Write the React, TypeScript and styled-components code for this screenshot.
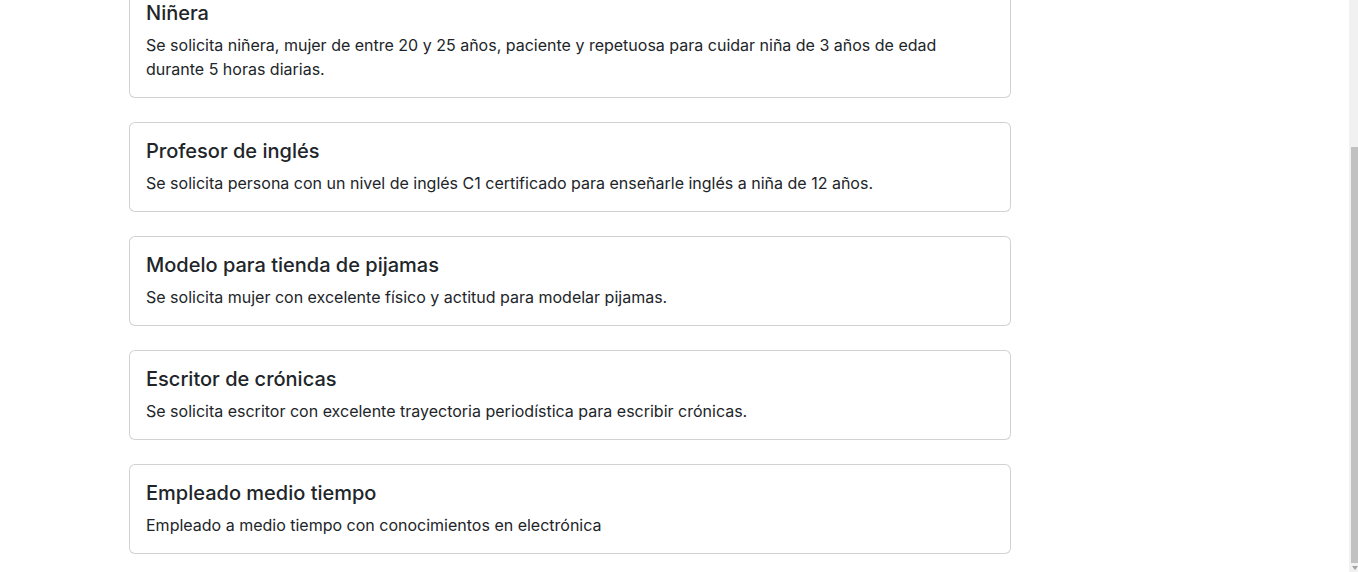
import React, { useLayoutEffect, useRef } from "react";
import styled, { createGlobalStyle } from "styled-components";

const GlobalStyle = createGlobalStyle`
  html, body { margin: 0; padding: 0; background: #fff; overflow: hidden; }
  body {
    font-family: Inter, "Noto Sans", "Liberation Sans", sans-serif;
    font-size: 16px;
    line-height: 1.5;
    color: #212529;
  }
  * { box-sizing: border-box; }
`;

const Viewport = styled.div`
  height: 100vh;
  overflow-y: scroll;
  &::-webkit-scrollbar { width: 9px; }
  &::-webkit-scrollbar-track { background: #f1f1f1; }
  &::-webkit-scrollbar-thumb { background: #c1c1c1; border-left: 2px solid #f1f1f1; }
`;

/* Decorative scrollbar drawn over the page edge (the headless browser hides native ones) */
const ScrollTrack = styled.div`
  position: fixed;
  top: 0;
  right: 0;
  width: 9px;
  height: 100vh;
  background: #f1f1f1;
  pointer-events: none;
`;

const ScrollThumb = styled.div`
  position: absolute;
  left: 2px;
  right: 0;
  top: 147px;
  height: 416px;
  background: #c1c1c1;
`;

const ScrollArrow = styled.div`
  position: absolute;
  left: 3px;
  bottom: 2px;
  width: 0;
  height: 0;
  border-left: 3px solid transparent;
  border-right: 3px solid transparent;
  border-top: 4px solid #a3a3a3;
`;

const Page = styled.main`
  display: flex;
  flex-direction: column;
  gap: 24px;
  padding: 0 0 18px 129px;
`;

const Header = styled.header`
  height: 159px;
  display: flex;
  align-items: flex-end;
  width: 882px;
`;

const PageTitle = styled.h1`
  margin: 0 0 8px;
  font-size: 32px;
  font-weight: 500;
  line-height: 1.2;
`;

const List = styled.section`
  display: flex;
  flex-direction: column;
  gap: 24px;
  width: 882px;
`;

const Card = styled.article`
  border: 1px solid rgba(0, 0, 0, 0.175);
  border-radius: 6px;
  background: #fff;
  padding: 16px;
`;

const CardTitle = styled.h5`
  margin: 0 0 8px;
  font-size: 20px;
  font-weight: 500;
  line-height: 1.2;
`;

const CardText = styled.p`
  margin: 0;
  font-size: 16px;
  line-height: 24px;
`;

const jobs = [
  {
    title: "Niñera",
    text: "Se solicita niñera, mujer de entre 20 y 25 años, paciente y repetuosa para cuidar niña de 3 años de edad durante 5 horas diarias.",
  },
  {
    title: "Profesor de inglés",
    text: "Se solicita persona con un nivel de inglés C1 certificado para enseñarle inglés a niña de 12 años.",
  },
  {
    title: "Modelo para tienda de pijamas",
    text: "Se solicita mujer con excelente físico y actitud para modelar pijamas.",
  },
  {
    title: "Escritor de crónicas",
    text: "Se solicita escritor con excelente trayectoria periodística para escribir crónicas.",
  },
  {
    title: "Empleado medio tiempo",
    text: "Empleado a medio tiempo con conocimientos en electrónica",
  },
];

export default function App() {
  const ref = useRef<HTMLDivElement>(null);
  useLayoutEffect(() => {
    const el = ref.current;
    if (el) el.scrollTop = el.scrollHeight;
  }, []);
  return (
    <>
      <GlobalStyle />
      <Viewport ref={ref}>
        <Page>
          <Header>
            <PageTitle>Ofertas de empleo</PageTitle>
          </Header>
          <List>
            {jobs.map((j) => (
              <Card key={j.title}>
                <CardTitle>{j.title}</CardTitle>
                <CardText>{j.text}</CardText>
              </Card>
            ))}
          </List>
        </Page>
      </Viewport>
      <ScrollTrack aria-hidden>
        <ScrollThumb />
        <ScrollArrow />
      </ScrollTrack>
    </>
  );
}
